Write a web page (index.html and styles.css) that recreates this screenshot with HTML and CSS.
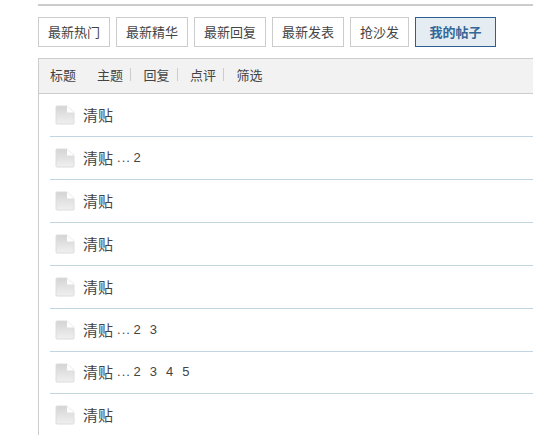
FILE: index.html
```html
<!DOCTYPE html>
<html>
<head>
	<title>我的帖子</title>
	<link rel="stylesheet" href="styles.css">
</head>
<body>
	<div class="top-line"></div>
	<div class="tab-bar">
		<a class="tab">最新热门</a>
		<a class="tab">最新精华</a>
		<a class="tab">最新回复</a>
		<a class="tab">最新发表</a>
		<a class="tab tab-small">抢沙发</a>
		<a class="tab tab-active">我的帖子</a>
	</div>
	<div class="thread-box">
		<div class="thread-head">
			<span class="head-title">标题</span>
			<span class="head-link">主题</span>
			<span class="head-link">回复</span>
			<span class="head-link">点评</span>
			<span class="head-last">筛选</span>
		</div>
		<div class="thread-row">
			<svg class="file-icon" width="20" height="20" viewBox="0 0 20 20"><use href="#doc"/></svg>
			<span class="thread-title">清贴</span>
		</div>
		<div class="thread-row">
			<svg class="file-icon" width="20" height="20" viewBox="0 0 20 20"><use href="#doc"/></svg>
			<span class="thread-title">清贴</span>
			<span class="pages">... <a>2</a></span>
		</div>
		<div class="thread-row">
			<svg class="file-icon" width="20" height="20" viewBox="0 0 20 20"><use href="#doc"/></svg>
			<span class="thread-title">清贴</span>
		</div>
		<div class="thread-row">
			<svg class="file-icon" width="20" height="20" viewBox="0 0 20 20"><use href="#doc"/></svg>
			<span class="thread-title">清贴</span>
		</div>
		<div class="thread-row">
			<svg class="file-icon" width="20" height="20" viewBox="0 0 20 20"><use href="#doc"/></svg>
			<span class="thread-title">清贴</span>
		</div>
		<div class="thread-row">
			<svg class="file-icon" width="20" height="20" viewBox="0 0 20 20"><use href="#doc"/></svg>
			<span class="thread-title">清贴</span>
			<span class="pages">... <a>2</a><a>3</a></span>
		</div>
		<div class="thread-row row-short">
			<svg class="file-icon" width="20" height="20" viewBox="0 0 20 20"><use href="#doc"/></svg>
			<span class="thread-title">清贴</span>
			<span class="pages">... <a>2</a><a>3</a><a>4</a><a>5</a></span>
		</div>
		<div class="thread-row">
			<svg class="file-icon" width="20" height="20" viewBox="0 0 20 20"><use href="#doc"/></svg>
			<span class="thread-title">清贴</span>
		</div>
	</div>
	<svg class="icon-defs" width="0" height="0">
		<defs>
			<linearGradient id="docFill" x1="0" y1="0" x2="0" y2="1">
				<stop offset="0" stop-color="#d4d4d4"/>
				<stop offset="1" stop-color="#f0f0f0"/>
			</linearGradient>
			<symbol id="doc" viewBox="0 0 20 20">
				<path d="M1 2 Q1 1 2 1 H12 L19 7.500 V18 Q19 19 18 19 H2 Q1 19 1 18 Z" fill="url(#docFill)" stroke="#dcdcdc"/>
				<path d="M12 1 V7.500 H19 Z" fill="#fff"/>
			</symbol>
		</defs>
	</svg>
</body>
</html>
```

FILE: styles.css
```css
html, body {
	overflow: hidden;
}
body {
	margin: 0;
	padding: 4px 0 0 38px;
	background-color: #fff;
	font-family: "Noto Sans CJK SC", "Liberation Sans", sans-serif;
	color: #444;
}
.top-line {
	height: 2px;
	background-color: #ccc;
}
.tab-bar {
	display: flex;
	gap: 6px;
	margin-top: 11px;
}
.tab {
	box-sizing: border-box;
	width: 72px;
	height: 30px;
	line-height: 27px;
	border: 1px solid #ccc;
	text-align: center;
	font-size: 13px;
	color: #444;
}
.tab-small {
	width: 59px;
}
.tab-active {
	width: 81px;
	border-color: #2b6095;
	background-color: #e5edf2;
	color: #369;
	font-weight: bold;
}
.thread-box {
	box-sizing: border-box;
	margin-top: 11px;
	border-left: 1px solid #ccc;
	height: 377px;
	overflow: hidden;
}
.thread-head {
	box-sizing: border-box;
	display: flex;
	align-items: center;
	height: 36px;
	padding: 0 0 3px 11px;
	background-color: #f2f2f2;
	border-top: 1px solid #ccc;
	border-bottom: 1px solid #ccc;
	font-size: 13px;
	color: #444;
}
.head-title {
	margin-right: 21px;
}
.head-link {
	margin-right: 12.500px;
	padding-right: 7px;
	border-right: 1px solid #ccc;
	line-height: 13px;
}
.thread-row {
	box-sizing: border-box;
	display: flex;
	align-items: center;
	height: 43px;
	margin-left: 11px;
	padding: 0 0 2px 5px;
	border-bottom: 1px solid #c2d5e3;
}
.row-short {
	height: 42px;
}
.file-icon {
	margin: 2px 8px 0 0;
}
.thread-title {
	font-size: 15px;
	color: #444;
}
.pages {
	margin-left: 4px;
	font-family: "Liberation Sans", sans-serif;
	font-size: 13px;
	letter-spacing: 1px;
	word-spacing: -2px;
	color: #444;
}
.pages a {
	margin-right: 8px;
}
.icon-defs {
	position: absolute;
}
```
